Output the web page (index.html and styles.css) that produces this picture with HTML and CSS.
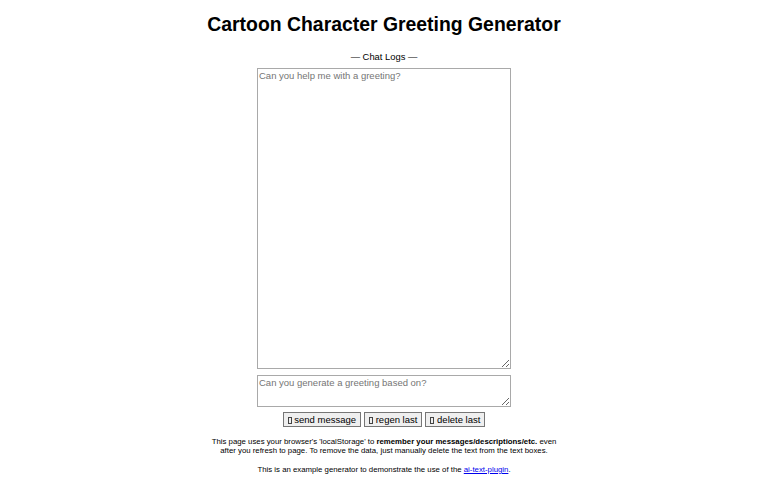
FILE: index.html
```html
<!DOCTYPE html>
<html>
<head>
<meta charset="utf-8">
<link rel="stylesheet" href="styles.css">
</head>
<body>
<h1 class="title">Cartoon Character Greeting Generator</h1>
<div class="chat">
  <div class="label">— Chat Logs —</div>
  <textarea class="log" placeholder="Can you help me with a greeting?"></textarea>
  <textarea class="input" placeholder="Can you generate a greeting based on?"></textarea>
  <div class="buttons">
    <button class="btn"><span class="tofu"></span> send message</button>
    <button class="btn"><span class="tofu"></span> regen last</button>
    <button class="btn"><span class="tofu"></span> delete last</button>
  </div>
</div>
<div class="footer">
  <p class="note">This page uses your browser's 'localStorage' to <b>remember your messages/descriptions/etc.</b> even after you refresh to page. To remove the data, just manually delete the text from the text boxes.</p>
  <p class="note">This is an example generator to demonstrate the use of the <a class="link" href="#">ai-text-plugin</a>.</p>
</div>
</body>
</html>
```
FILE: styles.css
```css
html, body {
  margin: 0;
  padding: 0;
  background: #fff;
  font-family: "Liberation Sans", Arial, sans-serif;
  color: #000;
}
body {
  padding-top: 12px;
}
.title {
  margin: 0;
  text-align: center;
  font-size: 19.4px;
  font-weight: bold;
  line-height: 24px;
}
.chat {
  display: flex;
  flex-direction: column;
  align-items: center;
  margin-top: 15px;
}
.label {
  font-size: 9.4px;
  line-height: 11px;
  margin-bottom: 6px;
}
.log, .input {
  box-sizing: border-box;
  width: 254px;
  border: 1px solid #a9a9a9;
  font-family: "Liberation Sans", Arial, sans-serif;
  font-size: 9.5px;
  padding: 1px 1px;
  margin: 0;
  resize: vertical;
}
.log { height: 301px; }
.input { height: 32px; margin-top: 6px; }
.log::placeholder, .input::placeholder { color: #757575; }
.buttons {
  display: flex;
  gap: 3px;
  margin-top: 5px;
}
.btn {
  font-family: "Liberation Sans", Arial, sans-serif;
  font-size: 9.5px;
  padding: 1px 4px;
  height: 15px;
  background: #efefef;
  border: 1px solid #767676;
  border-radius: 0;
  line-height: 11px;
}
.tofu {
  display: inline-block;
  box-sizing: border-box;
  width: 4px;
  height: 7px;
  border: 1px solid #444;
  vertical-align: -1px;
}
.footer {
  margin-top: 10px;
  text-align: center;
}
.note {
  width: 360px;
  margin: 0 auto 10px;
  font-size: 7.8px;
  line-height: 9px;
}
.link { color: #0000ee; }
```
